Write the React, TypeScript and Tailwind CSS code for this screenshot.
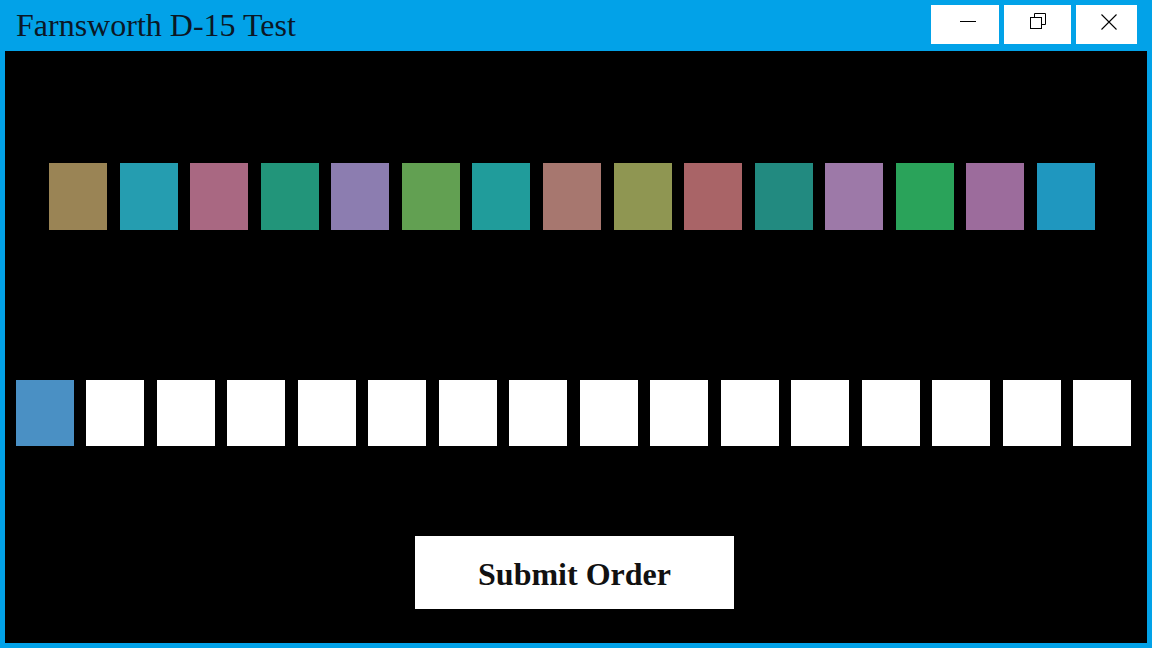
import React from "react";

const serif = { fontFamily: '"Liberation Serif", "Times New Roman", serif' };

// top row: the shuffled caps (15)
const caps = [
  "bg-[#9a8455]",
  "bg-[#259db0]",
  "bg-[#a96882]",
  "bg-[#22957a]",
  "bg-[#8c7db0]",
  "bg-[#62a052]",
  "bg-[#209c9b]",
  "bg-[#a7776f]",
  "bg-[#8f9652]",
  "bg-[#a96467]",
  "bg-[#228a80]",
  "bg-[#9d79a8]",
  "bg-[#2aa35a]",
  "bg-[#9c6c9c]",
  "bg-[#1f97bf]",
];

// bottom row: reference cap + 15 empty slots
const slots = ["bg-[#4a90c4]", ...Array(15).fill("bg-white")];

function MinIcon() {
  return (
    <svg width="16" height="16" viewBox="0 0 16 16" className="ml-[6px]">
      <line x1="0" y1="7.5" x2="16" y2="7.5" stroke="#000" strokeWidth="1" />
    </svg>
  );
}

function RestoreIcon() {
  return (
    <svg width="16" height="16" viewBox="0 0 16 16">
      <rect x="0.5" y="4.5" width="11" height="11" fill="none" stroke="#000" strokeWidth="1" />
      <path d="M4.5 4.5 V0.5 H15.5 V11.5 H11.5" fill="none" stroke="#000" strokeWidth="1" />
    </svg>
  );
}

function CloseIcon() {
  return (
    <svg width="16" height="16" viewBox="0 0 16 16" className="ml-[4px]">
      <path d="M0.5 0.5 L15.5 15.5 M15.5 0.5 L0.5 15.5" fill="none" stroke="#000" strokeWidth="1.1" />
    </svg>
  );
}

export default function App() {
  return (
    <div className="w-[1152px] h-[648px] bg-[#02a2e8] flex flex-col overflow-hidden">
      {/* title bar */}
      <div className="h-[51px] flex items-start shrink-0">
        <div
          className="mt-[9px] ml-[16px] text-[32px] leading-none text-[#0b1726] whitespace-nowrap"
          style={serif}
        >
          Farnsworth D-15 Test
        </div>
        <div className="ml-auto mr-[15px] mt-[5px] flex gap-[5px]">
          <div className="w-[68px] h-[39px] bg-white flex justify-center pt-[9px]">
            <MinIcon />
          </div>
          <div className="w-[67px] h-[39px] bg-white flex justify-center pt-[8px]">
            <RestoreIcon />
          </div>
          <div className="w-[61px] h-[39px] bg-white flex justify-center pt-[9px]">
            <CloseIcon />
          </div>
        </div>
      </div>

      {/* test area */}
      <div className="flex-1 mx-[5px] mb-[5px] bg-black flex flex-col pt-[112px]">
        <div className="flex gap-[12.57px] pl-[44px]">
          {caps.map((c, i) => (
            <div key={i} className={`w-[58px] h-[67px] shrink-0 ${c}`} />
          ))}
        </div>

        <div className="flex gap-[12.47px] pl-[11px] mt-[150px]">
          {slots.map((c, i) => (
            <div key={i} className={`w-[58px] h-[66px] shrink-0 ${c}`} />
          ))}
        </div>

        <button
          className="ml-[410px] mt-[90px] w-[319px] h-[73px] bg-white flex items-center justify-center pt-[3px] text-[32px] font-bold text-[#111]"
          style={serif}
        >
          Submit Order
        </button>
      </div>
    </div>
  );
}
